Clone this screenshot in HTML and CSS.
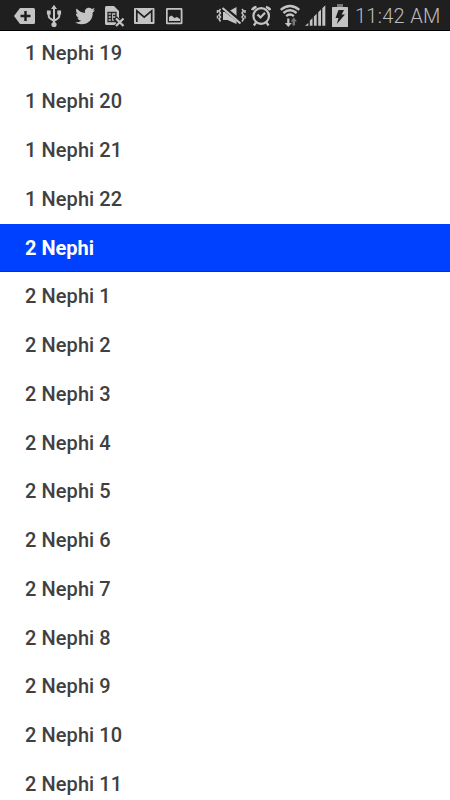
FILE: index.html
```html
<!DOCTYPE html>
<html lang="en">
<head>
<meta charset="utf-8">
<title>Chapters</title>
<link rel="stylesheet" href="styles.css">
</head>
<body>
<div class="screen">
<header class="status-bar">
  <div class="icons">
    <svg width="22" height="30" viewBox="14 0 22 30"><path class="fill" d="M14 16 20 8H33.500Q35 8 35 9.500V22.500Q35 24 33.500 24H20Z"/><path d="M25.500 11V21M20.500 16H30.500" fill="none" stroke="#1f1f1f" stroke-width="2.500"/></svg>
    <svg width="16" height="30" viewBox="46 0 16 30"><path class="line" stroke-width="2" d="M54 8V24M48.700 13V16Q48.700 18 50.700 18.800L54 20.800 57.300 18.800Q59.300 18 59.300 16V13"/><path class="fill" d="M54 4.800 57 9H51ZM46.900 10.500H50.700V14.500H46.900ZM57.300 10.500H61.100V14.500H57.300Z"/><circle class="fill" cx="54" cy="24.500" r="2.600"/></svg>
    <svg width="21" height="30" viewBox="75 0 21 30"><path class="fill" d="M95 10.200Q94 11.600 92.700 12.400C93.100 19 88.500 24.200 81.500 24.200Q77.800 24.200 75 22.400Q78.500 22.700 81.200 20.700Q78.200 20.400 77.300 17.700H79.200Q76 16.700 75.900 13.400L77.800 13.900Q75 11.500 76.600 8.500Q80.200 12.600 85 12.900C84.300 9.800 86.300 7.700 88.800 7.700Q90.700 7.700 91.900 9L94.600 8Q94.100 9.500 92.900 10.500Z"/></svg>
    <svg width="20" height="30" viewBox="105 0 20 30"><path class="fill" d="M106.500 6H114L119 11V18L124 23 119 25H106.500Q105 25 105 23.500V7.500Q105 6 106.500 6Z"/><path d="M108 12.500H116V21.500H108ZM108 15.500H111M108 18.500H111M111.500 12.500V21.500M113 15.500H116M113 18.500H116" fill="none" stroke="#292929" stroke-width="1.300"/><path d="M115 18 125 28M125 18 115 28" stroke="#1f1f1f" stroke-width="5"/><path class="line" stroke-width="2.200" d="M116 18.500 123.500 26M123.500 18.500 116 26"/></svg>
    <svg width="21" height="30" viewBox="134 0 21 30"><rect class="fill" x="134" y="8" width="20.500" height="16" rx="1"/><path d="M136.800 22V10.800L144.200 17.200 151.700 10.800V22" fill="none" stroke="#1f1f1f" stroke-width="1.700"/></svg>
    <svg width="17" height="30" viewBox="166 0 17 30"><rect x="166.800" y="8.900" width="14.800" height="14.500" rx=".5" fill="#1f1f1f" stroke="#c4c4c4" stroke-width="1.800"/><path class="fill" d="M169 17 171.500 15.500 174.500 18 177 17 180 19V21H169Z"/></svg>
  </div>
  <div class="icons system">
    <svg width="30" height="30" viewBox="216 0 30 30"><path class="fill" d="M223 12H227.500L236.500 7V24L227.500 20H223Z"/><path d="M221 6 241 22" stroke="#1f1f1f" stroke-width="4.500"/><path class="line" stroke-width="2.200" d="M222.500 8 240.500 23.500"/><path class="line" stroke-width="1.500" d="M220.500 9 219 11 220.500 13 219 15 220.500 17 219 19 220.500 21.500M217.500 10V13M217.500 15.500V18.500M242 9 243.500 11 242 13 243.500 15 242 17 243.500 19 242 21.500M245 10V13M245 15.500V18.500"/></svg>
    <svg width="20" height="30" viewBox="251 0 20 30"><circle class="line" cx="261.200" cy="16" r="7.800" stroke-width="2.200"/><path class="line" stroke-width="2.200" d="M257.500 14.500 260.500 17.500 265 12.800M256 22.500 253.800 25.500M266.400 22.500 268.600 25.500"/><path class="line" stroke-width="2.800" d="M252.300 10.200Q253 7.800 256.500 7M270.100 10.200Q269.400 7.800 265.900 7"/></svg>
    <svg width="21" height="30" viewBox="280 0 21 30"><path class="line" stroke-width="2.300" d="M280.700 9.800Q290 2.200 299.300 9.800M283.400 13Q290 7.500 296.600 13M286.200 16.200Q290 12.900 293.800 16.200"/><path class="fill" d="M287.200 18.500H289.400V23H291.800L288.300 27 284.800 23H287.200Z"/><path fill="#777" d="M292.500 25.500V21.500H290.800L293.800 17.300 296.900 21.500H295V25.500Z"/></svg>
    <svg width="21" height="30" viewBox="305 0 21 30"><path class="fill" d="M305 25.800 308.300 23V25.800ZM309.800 25.800V20.700L312.500 18V25.800ZM313.900 25.800V16.500L316.700 13.800V25.800ZM318.200 25.800V12.300L321 9.500V25.800ZM322.300 25.800V8.200L325.300 5.300V25.800Z"/></svg>
    <svg width="16" height="30" viewBox="332 0 16 30"><path fill="#777" d="M337 4H343V7H337Z"/><rect class="fill" x="332" y="7" width="16" height="20" rx=".6"/><path fill="#1f1f1f" d="M338.500 10H344L341.700 14.500H345L336.800 24 338.500 18H335.500Z"/></svg>
    <time class="clock">11:42 AM</time>
  </div>
</header>
<main class="viewport">
  <ul class="list">
    <li>1 Nephi 19</li>
    <li>1 Nephi 20</li>
    <li>1 Nephi 21</li>
    <li>1 Nephi 22</li>
    <li class="book">2 Nephi</li>
    <li>2 Nephi 1</li>
    <li>2 Nephi 2</li>
    <li>2 Nephi 3</li>
    <li>2 Nephi 4</li>
    <li>2 Nephi 5</li>
    <li>2 Nephi 6</li>
    <li>2 Nephi 7</li>
    <li>2 Nephi 8</li>
    <li>2 Nephi 9</li>
    <li>2 Nephi 10</li>
    <li>2 Nephi 11</li>
  </ul>
</main>
</div>
</body>
</html>
```
FILE: styles.css
```css
* { box-sizing: border-box; }
body {
  margin: 0;
  background: #fff;
  font-family: Roboto, "Noto Sans", sans-serif;
}
.screen {
  display: flex;
  flex-direction: column;
  width: 450px;
  height: 800px;
  overflow: hidden;
}
.status-bar {
  display: flex;
  flex: none;
  height: 31px;
  padding-left: 14px;
  background: #1f1f1f;
  border-bottom: 1px solid #000;
}
.icons { display: flex; flex: none; gap: 10px; height: 30px; }
.icons svg { display: block; flex: none; }
.icons svg:nth-child(2) { margin-right: 3px; }
.icons svg:nth-child(3) { margin-right: -1px; }
.icons svg:nth-child(4) { margin-right: -1px; }
.icons svg:nth-child(5) { margin-right: 1px; }
.system { gap: 5px; margin-left: 33px; }
.system svg:nth-child(2) { margin-right: 4px; }
.system svg:nth-child(3) { margin-right: -1px; }
.system svg:nth-child(4) { margin-right: 1px; }
.system svg:nth-child(5) { margin-right: 2px; }
.fill { fill: #c4c4c4; }
.line { fill: none; stroke: #c4c4c4; }
.clock {
  color: #bdbdbd;
  font-size: 20px;
  font-weight: 300;
  letter-spacing: .28px;
  line-height: 32px;
  white-space: nowrap;
}
.viewport { flex: 1; min-height: 0; overflow: hidden; }
.list {
  margin: -2.5px 0 0;
  padding: 0;
  list-style: none;
}
.list li {
  height: 48.75px;
  padding-left: 25px;
  color: #404040;
  font-size: 20px;
  font-weight: 500;
  letter-spacing: .08px;
  line-height: 49.5px;
}
.list .book {
  background: #0040ff;
  border-bottom: 1px solid #0032c8;
  color: #fff;
  font-weight: 700;
  letter-spacing: 0;
}
```
